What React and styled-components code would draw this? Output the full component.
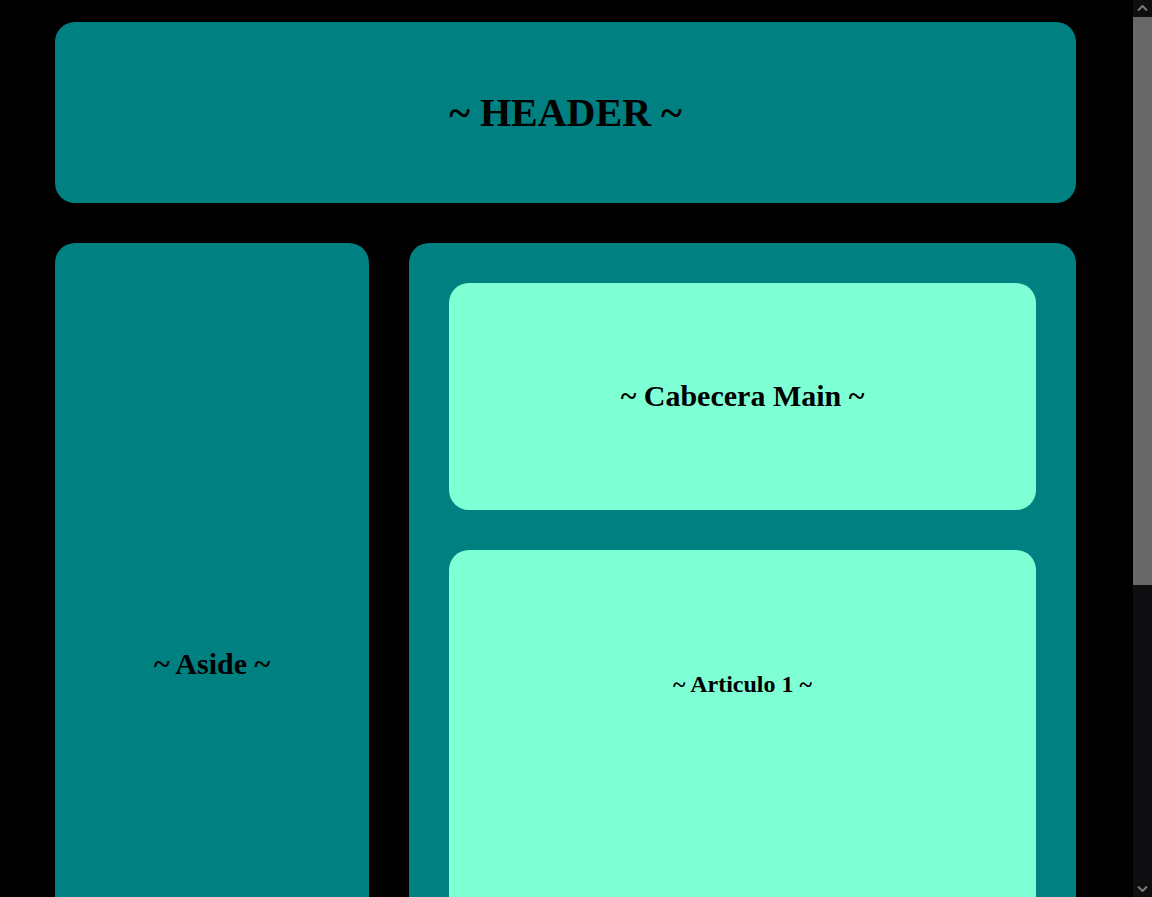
import React from "react";
import styled, { createGlobalStyle } from "styled-components";

const GlobalStyle = createGlobalStyle`
  html {
    color-scheme: dark;
    background: #000;
  }
  body {
    margin: 0;
    background: #000;
    color: #000;
    font-family: "Liberation Serif", "Times New Roman", serif;
  }
`;

const Page = styled.div`
  box-sizing: border-box;
  width: 1076px;
  padding: 22px 0 57px 55px;
  display: grid;
  grid-template-columns: 314px 667px;
  column-gap: 40px;
  row-gap: 40px;
`;

const Panel = styled.div`
  box-sizing: border-box;
  background: ${(p) => (p.$light ? "#7fffd4" : "#008080")};
  border-radius: 20px;
`;

const Header = styled(Panel).attrs({ as: "header" })`
  grid-column: 1 / -1;
  height: 181px;
  display: flex;
  align-items: center;
  justify-content: center;
`;

const Footer = styled(Header).attrs({ as: "footer" })``;

const Aside = styled(Panel).attrs({ as: "aside" })`
  height: 842px;
  display: flex;
  align-items: center;
  justify-content: center;
`;

const Main = styled(Panel).attrs({ as: "main" })`
  padding: 40px;
  display: flex;
  flex-direction: column;
  gap: 40px;
`;

const MainHead = styled(Panel)`
  height: 227px;
  display: flex;
  align-items: center;
  justify-content: center;
`;

const Article = styled(Panel).attrs({ as: "article" })`
  flex: 1;
  padding-top: 121px;
  display: flex;
  justify-content: center;
  align-items: flex-start;
`;

const Title = styled.h1`
  margin: 0;
  font-weight: bold;
  font-size: ${(p) => p.$size}px;
  line-height: 1.15;
  color: #000;
`;

/* Browser scrollbar as shown in the screenshot (overlay at the viewport edge) */
const ScrollBar = styled.div`
  position: fixed;
  top: 0;
  right: 0;
  width: 19px;
  height: 100vh;
  background: #0e0d10;
  display: flex;
  flex-direction: column;
  z-index: 10;
`;

const ScrollButton = styled.div`
  height: 17px;
  flex: none;
  display: flex;
  align-items: center;
  justify-content: center;
`;

const Thumb = styled.div`
  height: 568px;
  flex: none;
  background: #686868;
`;

const Track = styled.div`
  flex: 1;
`;

const Chevron = ({ down }) => (
  <svg width="11" height="7" viewBox="0 0 11 7">
    <path
      d={down ? "M1 1.5 L5.5 6 L10 1.5" : "M1 5.5 L5.5 1 L10 5.5"}
      fill="none"
      stroke="#7a7a7a"
      strokeWidth="2"
    />
  </svg>
);

export default function App() {
  return (
    <>
      <GlobalStyle />
      <Page>
        <Header>
          <Title $size={40}>~ HEADER ~</Title>
        </Header>
        <Aside>
          <Title $size={30}>~ Aside ~</Title>
        </Aside>
        <Main>
          <MainHead $light>
            <Title $size={30}>~ Cabecera Main ~</Title>
          </MainHead>
          <Article $light>
            <Title $size={24}>~ Articulo 1 ~</Title>
          </Article>
        </Main>
        <Footer>
          <Title $size={40}>~ FOOTER ~</Title>
        </Footer>
      </Page>
      <ScrollBar aria-hidden="true">
        <ScrollButton>
          <Chevron />
        </ScrollButton>
        <Thumb />
        <Track />
        <ScrollButton>
          <Chevron down />
        </ScrollButton>
      </ScrollBar>
    </>
  );
}
